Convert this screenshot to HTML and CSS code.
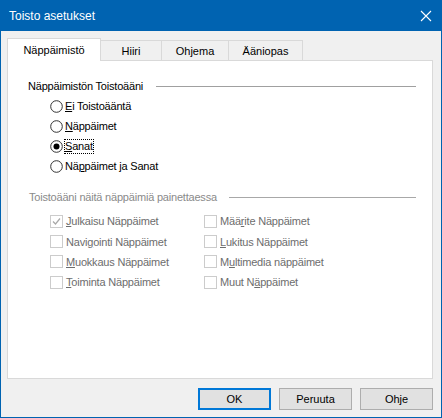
FILE: index.html
```html
<!DOCTYPE html>
<html lang="fi">
<head>
<meta charset="utf-8">
<title>Toisto asetukset</title>
<link rel="stylesheet" href="styles.css">
</head>
<body>
<div class="window">
  <div class="titlebar">
    <span class="title">Toisto asetukset</span>
    <svg class="close" width="12" height="12" viewBox="0 0 12 12"><path d="M1 1 L11 11 M11 1 L1 11" stroke="#fff" stroke-width="1.1" fill="none"/></svg>
  </div>
  <div class="body">
    <div class="tabs">
      <div class="tab active t1">Näppäimistö</div>
      <div class="tab t2">Hiiri</div>
      <div class="tab t3">Ohjema</div>
      <div class="tab t4">Ääniopas</div>
    </div>
    <div class="panel">
      <div class="group-title"><span>Näppäimistön Toistoääni</span><i class="line l1"></i></div>
      <div class="radios">
        <div class="radio"><svg width="13" height="13" viewBox="0 0 13 13"><circle cx="6.5" cy="6.5" r="5.8" fill="#fff" stroke="#333" stroke-width="1"/></svg><span><u>E</u>i Toistoääntä</span></div>
        <div class="radio"><svg width="13" height="13" viewBox="0 0 13 13"><circle cx="6.5" cy="6.5" r="5.8" fill="#fff" stroke="#333" stroke-width="1"/></svg><span><u>N</u>äppäimet</span></div>
        <div class="radio"><svg width="13" height="13" viewBox="0 0 13 13"><circle cx="6.5" cy="6.5" r="5.8" fill="#fff" stroke="#333" stroke-width="1"/><circle cx="6.5" cy="6.5" r="3" fill="#000"/></svg><span class="focus"><u>S</u>anat</span></div>
        <div class="radio"><svg width="13" height="13" viewBox="0 0 13 13"><circle cx="6.5" cy="6.5" r="5.8" fill="#fff" stroke="#333" stroke-width="1"/></svg><span>Nä<u>p</u>päimet ja Sanat</span></div>
      </div>
      <div class="group-title disabled g2"><span>Toistoääni näitä näppäimiä painettaessa</span><i class="line l2"></i></div>
      <div class="checks">
        <div class="check"><svg width="13" height="13" viewBox="0 0 13 13"><rect x="0.5" y="0.5" width="12" height="12" fill="#fff" stroke="#cccccc"/><path d="M3 6.5 L5.5 9 L10 3.5" stroke="#a8a8a8" stroke-width="1.2" fill="none"/></svg><span><u>J</u>ulkaisu Näppäimet</span></div>
        <div class="check"><svg width="13" height="13" viewBox="0 0 13 13"><rect x="0.5" y="0.5" width="12" height="12" fill="#fff" stroke="#cccccc"/></svg><span>Mää<u>r</u>ite Näppäimet</span></div>
        <div class="check"><svg width="13" height="13" viewBox="0 0 13 13"><rect x="0.5" y="0.5" width="12" height="12" fill="#fff" stroke="#cccccc"/></svg><span>Navi<u>g</u>ointi Näppäimet</span></div>
        <div class="check"><svg width="13" height="13" viewBox="0 0 13 13"><rect x="0.5" y="0.5" width="12" height="12" fill="#fff" stroke="#cccccc"/></svg><span><u>L</u>ukitus Näppäimet</span></div>
        <div class="check"><svg width="13" height="13" viewBox="0 0 13 13"><rect x="0.5" y="0.5" width="12" height="12" fill="#fff" stroke="#cccccc"/></svg><span><u>M</u>uokkaus Näppäimet</span></div>
        <div class="check"><svg width="13" height="13" viewBox="0 0 13 13"><rect x="0.5" y="0.5" width="12" height="12" fill="#fff" stroke="#cccccc"/></svg><span>M<u>u</u>ltimedia näppäimet</span></div>
        <div class="check"><svg width="13" height="13" viewBox="0 0 13 13"><rect x="0.5" y="0.5" width="12" height="12" fill="#fff" stroke="#cccccc"/></svg><span><u>T</u>oiminta Näppäimet</span></div>
        <div class="check"><svg width="13" height="13" viewBox="0 0 13 13"><rect x="0.5" y="0.5" width="12" height="12" fill="#fff" stroke="#cccccc"/></svg><span>Muut N<u>ä</u>ppäimet</span></div>
      </div>
    </div>
    <div class="buttons">
      <button class="btn default">OK</button>
      <button class="btn">Peruuta</button>
      <button class="btn">Ohje</button>
    </div>
  </div>
</div>
</body>
</html>
```

FILE: styles.css
```css
* { box-sizing: border-box; }
html, body { margin: 0; padding: 0; }
body {
  width: 442px;
  height: 418px;
  font-family: "Liberation Sans", Arial, sans-serif;
  font-size: 11px;
  color: #000;
  overflow: hidden;
}
.window {
  width: 442px;
  height: 418px;
  background: #f0f0f0;
  border: 1px solid #0063b1;
  border-top: none;
  display: flex;
  flex-direction: column;
}
.titlebar {
  height: 31px;
  background: #0063b1;
  margin: 0 -1px;
  display: flex;
  align-items: center;
  justify-content: space-between;
  padding: 0 10px 0 9px;
  color: #fff;
}
.title { font-size: 12px; }
.close { display: block; }
.body {
  padding: 7px 8px 0 6px;
  display: flex;
  flex-direction: column;
}
.tabs {
  display: flex;
  align-items: flex-end;
  height: 22px;
  position: relative;
  z-index: 1;
}
.tab {
  height: 20px;
  background: #f0f0f0;
  border: 1px solid #d9d9d9;
  border-bottom: none;
  display: flex;
  align-items: center;
  justify-content: center;
  margin-left: -1px;
}
.tab.active {
  height: 23px;
  margin-bottom: -1px;
  background: #fff;
  margin-left: 0;
}
.t1 { width: 94px; }
.t2 { width: 62px; }
.t3 { width: 68px; }
.t4 { width: 75px; }
.panel {
  height: 319px;
  background: #fff;
  border: 1px solid #d9d9d9;
  padding: 15px 16px 0 20px;
  letter-spacing: -0.2px;
}
.group-title {
  display: flex;
  align-items: center;
  height: 20px;
}
.group-title .line {
  flex: 1;
  height: 1px;
  background: #a0a0a0;
  margin-left: 13px;
}
.group-title.disabled { color: #8a8a8a; margin-left: 1px; }
.group-title .l2 { background: #a8a8a8; margin-left: 12px; }
.g2 { margin-top: 11px; }
.radios {
  padding-left: 22px;
}
.radio {
  display: flex;
  align-items: center;
  height: 20px;
}
.radio svg { display: block; margin-right: 2px; }
.focus { outline: 1px dotted #000; outline-offset: 0; line-height: 13px; }
.checks {
  display: grid;
  grid-template-columns: 154px 1fr;
  grid-auto-rows: 20.4px;
  padding-left: 22px;
  margin-top: 4px;
  color: #6d6d6d;
}
.check {
  display: flex;
  align-items: center;
}
.check svg { display: block; margin-right: 3px; }
u { text-decoration: underline; text-underline-offset: 1px; }
.buttons {
  display: flex;
  justify-content: flex-end;
  gap: 8px;
  margin-top: 9px;
}
.btn {
  width: 73px;
  height: 22px;
  font-family: inherit;
  font-size: 11px;
  color: #000;
  background: #e1e1e1;
  border: 1px solid #adadad;
  padding: 0;
}
.btn.default { border: 2px solid #0078d7; }
```
